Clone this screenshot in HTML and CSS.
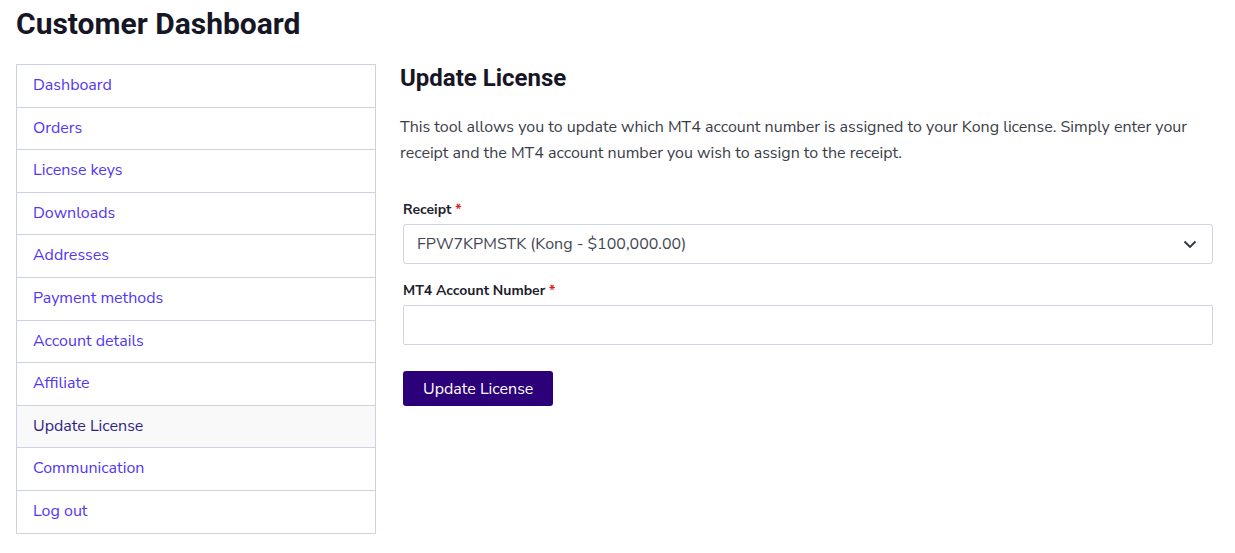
FILE: index.html
```html
<!DOCTYPE html>
<html>
<head>
<meta charset="utf-8">
<link rel="stylesheet" href="styles.css">
</head>
<body>
<h1 class="page-title">Customer Dashboard</h1>
<div class="layout">
  <nav class="side-nav">
    <ul>
      <li><a href="#">Dashboard</a></li>
      <li><a href="#">Orders</a></li>
      <li><a href="#">License keys</a></li>
      <li><a href="#">Downloads</a></li>
      <li><a href="#">Addresses</a></li>
      <li><a href="#">Payment methods</a></li>
      <li><a href="#">Account details</a></li>
      <li><a href="#">Affiliate</a></li>
      <li class="active"><a href="#">Update License</a></li>
      <li><a href="#">Communication</a></li>
      <li><a href="#">Log out</a></li>
    </ul>
  </nav>
  <main class="content">
    <h2 class="section-title">Update License</h2>
    <p class="intro">This tool allows you to update which MT4 account number is assigned to your Kong license. Simply enter your receipt and the MT4 account number you wish to assign to the receipt.</p>
    <form class="license-form">
      <label class="field-label">Receipt <span class="req">*</span></label>
      <div class="select-box">
        <span class="select-value">FPW7KPMSTK (Kong - $100,000.00)</span>
        <svg class="chevron" width="14" height="9" viewBox="0 0 14 9"><path d="M1.5 1.5 L7 7 L12.5 1.5" fill="none" stroke="#2d3340" stroke-width="1.8"/></svg>
      </div>
      <label class="field-label">MT4 Account Number <span class="req">*</span></label>
      <div class="text-input"></div>
      <button type="button" class="submit-btn">Update License</button>
    </form>
  </main>
</div>
</body>
</html>
```

FILE: styles.css
```css
* { box-sizing: border-box; }
body {
  margin: 0;
  padding: 6px 16px 0;
  background: #fff;
  font-family: "Nunito Sans", "Open Sans", sans-serif;
  color: #333640;
}
.page-title {
  margin: 0 0 22px;
  font-family: Roboto, sans-serif;
  font-weight: 700;
  font-size: 30px;
  line-height: 36px;
  color: #161626;
}
.layout {
  display: flex;
  gap: 24px;
  align-items: flex-start;
}
.side-nav {
  width: 360px;
  flex: none;
  border: 1px solid #ccd1e4;
  border-bottom: none;
}
.side-nav ul { list-style: none; margin: 0; padding: 0; }
.side-nav li { border-bottom: 1px solid #ccd1e4; }
.side-nav a {
  display: block;
  padding: 10px 16px;
  line-height: 21.6px;
  font-size: 16px;
  color: #5336f0;
  text-decoration: none;
}
.side-nav li.active { background: #f9f9f9; }
.side-nav li.active a { color: #2e1f86; }
.content { flex: 1; min-width: 0; }
.section-title {
  margin: 0 0 22px;
  font-family: Roboto, sans-serif;
  font-weight: 700;
  font-size: 24px;
  line-height: 28px;
  color: #161626;
}
.intro {
  margin: 0 0 34px;
  font-size: 16px;
  line-height: 26px;
  color: #3a3d48;
  padding-right: 20px;
}
.license-form {
  display: flex;
  flex-direction: column;
  align-items: flex-start;
  padding: 0 6px 0 3px;
}
.field-label {
  font-size: 14px;
  line-height: 20px;
  font-weight: 700;
  color: #1c1d2b;
  margin-bottom: 4px;
}
.req { color: #e0201a; }
.select-box, .text-input {
  align-self: stretch;
  height: 40px;
  border: 1px solid #cfd3e2;
  border-radius: 3px;
  margin-bottom: 17px;
}
.select-box {
  display: flex;
  align-items: center;
  justify-content: space-between;
  padding: 0 15px 0 13px;
}
.select-value {
  font-size: 16px;
  color: #444752;
}
.text-input { border-radius: 2px; margin-bottom: 26px; }
.submit-btn {
  height: 35px;
  padding: 0 20px;
  border: none;
  border-radius: 3px;
  background: #2b0078;
  color: #fff;
  font-family: inherit;
  font-size: 16px;
}
```
